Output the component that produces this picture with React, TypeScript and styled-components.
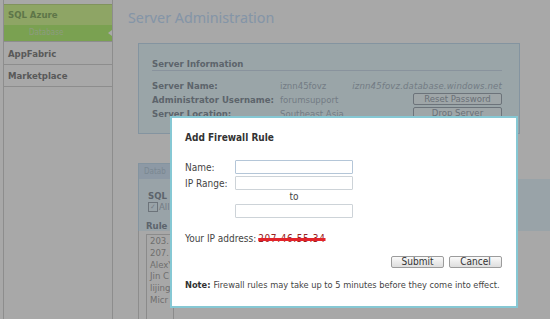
import React from "react";
import styled, { createGlobalStyle } from "styled-components";

const GlobalStyle = createGlobalStyle`
  html, body {
    margin: 0;
    padding: 0;
    background: #ffffff;
    font-family: "DejaVu Sans Condensed", "DejaVu Sans", Tahoma, sans-serif;
    font-size: 9px;
    color: #333;
  }
`;

const Page = styled.div`
  display: flex;
  height: 319px;
  overflow: hidden;
  background: #ffffff;
`;

const Sidebar = styled.nav`
  width: 108px;
  margin-left: 3px;
  padding-top: 4px;
  border-left: 1px solid #d7d7d7;
  border-right: 1px solid #d7d7d7;
  background: #ffffff;
  flex-shrink: 0;
`;

const NavItem = styled.div<{ $active?: boolean }>`
  height: 21px;
  line-height: 21px;
  padding-left: 4px;
  font-weight: bold;
  font-size: 9.5px;
  color: ${(p) => (p.$active ? "#8fb36e" : "#888888")};
  background: ${(p) => (p.$active ? "#d8fa9a" : "transparent")};
  border-bottom: ${(p) => (p.$active ? "none" : "1px solid #d7d7d7")};
  box-shadow: ${(p) => (p.$active ? "inset 0 1px 0 #c4e08e" : "none")};
`;

const SubItem = styled.div`
  position: relative;
  height: 16px;
  line-height: 16px;
  padding-left: 25px;
  font-size: 8px;
  color: #d6ecbf;
  background: #b9f47c;
  border-bottom: 1px solid #d7d7d7;
  margin-bottom: 1px;

  &::after {
    content: "";
    position: absolute;
    right: 0;
    top: 5px;
    border-style: solid;
    border-width: 3px 4px 3px 0;
    border-color: transparent #ffffff transparent transparent;
  }
`;

const Main = styled.main`
  flex: 1;
  padding: 8px 0 0 15px;
  min-width: 0;
`;

const Title = styled.h1`
  margin: 0;
  font-family: "Noto Sans", "Open Sans", sans-serif;
  font-weight: normal;
  font-size: 14.3px;
  line-height: 20px;
  color: #c8e2fd;
`;

const InfoPanel = styled.section`
  width: 350px;
  margin: 15px 0 0 10px;
  padding: 14px 17px 13px 13px;
  background: #eafbff;
  border: 1px solid #c8e1f3;
`;

const PanelHeading = styled.h2`
  margin: 0 0 7px;
  padding-bottom: 1px;
  font-size: 9.5px;
  line-height: 11px;
  font-weight: bold;
  color: #8d98a4;
  border-bottom: 1px solid #d1e0ee;
`;

const InfoGrid = styled.div`
  display: grid;
  grid-template-columns: 128px 71px 1fr;
  grid-auto-rows: 14px;
  align-items: center;
`;

const Label = styled.span`
  font-weight: bold;
  font-size: 9.5px;
  color: #8d98a4;
  white-space: nowrap;
`;

const Value = styled.span<{ $italic?: boolean }>`
  font-size: 9.5px;
  color: #afbcca;
  white-space: nowrap;
  font-style: ${(p) => (p.$italic ? "italic" : "normal")};
  justify-self: ${(p) => (p.$italic ? "end" : "start")};
  letter-spacing: ${(p) => (p.$italic ? "0.15px" : "0")};
`;

const PanelButton = styled.button`
  justify-self: end;
  width: 89px;
  height: 12px;
  padding: 0;
  font-family: inherit;
  font-size: 9.5px;
  line-height: 10px;
  color: #a1abb6;
  background: #f2fcff;
  border: 1px solid #a4afb9;
  border-radius: 2px;
`;

const DbPanel = styled.section`
  width: 440px;
  margin: 29px 0 0 10px;
`;

const DbTab = styled.div`
  display: inline-block;
  width: 92px;
  height: 15px;
  line-height: 15px;
  padding-left: 5px;
  font-size: 8px;
  color: #bacede;
  background: #d6e9fa;
  border: 1px solid #c8e1f3;
  border-bottom: none;
`;

const DbSection = styled.div`
  height: 52px;
  padding: 11px 0 0 9px;
  box-sizing: border-box;
  background: #e8f7ff;
  border-left: 1px solid #c8e1f3;
`;

const SectionTitle = styled.div`
  font-weight: bold;
  font-size: 9.5px;
  line-height: 11px;
  color: #8d98a4;
`;

const CheckRow = styled.label`
  display: flex;
  align-items: center;
  gap: 1px;
  font-size: 9.5px;
  line-height: 11px;
  color: #afbcca;
`;

const Check = styled.span`
  width: 8px;
  height: 8px;
  border: 1px solid #a4afb9;
  font-size: 7px;
  line-height: 8px;
  text-align: center;
`;

const RulesLabel = styled.div`
  margin: 8px 0 0 -2px;
  font-weight: bold;
  font-size: 9.5px;
  line-height: 11px;
  color: #8d98a4;
`;

const DbLower = styled.div`
  padding: 3px 0 0 7px;
  border-left: 1px solid #d7d7d7;
  height: 100px;
`;

const RulesList = styled.ul`
  list-style: none;
  margin: 0;
  padding: 0 3px;
  width: 20px;
  height: 90px;
  overflow: hidden;
  white-space: nowrap;
  border: 1px solid #d4d4d4;
  font-size: 9.5px;
  line-height: 11.8px;
  color: #a9a9a9;
`;

const Overlay = styled.div`
  position: fixed;
  inset: 0;
  background: rgba(0, 0, 0, 0.34);
`;

const Modal = styled.div`
  position: fixed;
  left: 170px;
  top: 116px;
  width: 317px;
  height: 160px;
  padding: 14px 14px 14px 13px;
  background: #ffffff;
  border: 2px solid #86c8d4;
  color: #3a3a3a;
`;

const ModalTitle = styled.h3`
  margin: 0 0 17px;
  font-size: 10px;
  line-height: 11px;
  font-weight: bold;
  color: #333;
`;

const FormGrid = styled.div`
  display: grid;
  grid-template-columns: 50px 118px;
  row-gap: 2px;
  align-items: center;
`;

const FieldLabel = styled.label`
  font-size: 10px;
  color: #444;
  white-space: nowrap;
`;

const Input = styled.input<{ $focus?: boolean }>`
  box-sizing: border-box;
  width: 118px;
  height: 14px;
  margin: 0;
  padding: 0 2px;
  border: 1px solid ${(p) => (p.$focus ? "#b4c6d8" : "#cdd3d8")};
  border-radius: 1px;
  background: #fff;
  font-size: 9px;
`;

const ToText = styled.div`
  grid-column: 2;
  text-align: center;
  font-size: 10px;
  line-height: 10px;
  color: #444;
`;

const IpLine = styled.div`
  display: flex;
  align-items: baseline;
  margin-top: 15px;
  font-size: 10px;
  line-height: 11px;
  color: #444;
`;

const Struck = styled.span`
  margin-left: 2px;
  color: #9a2020;
  letter-spacing: 0.6px;
  text-decoration: line-through;
  text-decoration-color: #e3242b;
  text-decoration-thickness: 3px;
`;

const ButtonRow = styled.div`
  display: flex;
  justify-content: flex-end;
  gap: 5px;
  margin-top: 12px;
`;

const DialogButton = styled.button`
  width: 53px;
  height: 12px;
  padding: 0;
  font-family: inherit;
  font-size: 10px;
  line-height: 10px;
  color: #333;
  background: linear-gradient(#fafafa, #dedede);
  border: 1px solid #9c9c9c;
  border-radius: 2px;
`;

const Note = styled.p`
  display: flex;
  gap: 3px;
  margin: 12px 0 0;
  font-size: 9.2px;
  line-height: 10px;
  color: #444;
  white-space: nowrap;
`;

const NoteLead = styled.b`
  color: #333;
`;

const rules = ["203.", "207.", "AlexY", "Jin C", "lijing", "Micr"];

export default function App() {
  return (
    <>
      <GlobalStyle />
      <Page>
        <Sidebar>
          <NavItem $active>SQL Azure</NavItem>
          <SubItem>Database</SubItem>
          <NavItem>AppFabric</NavItem>
          <NavItem>Marketplace</NavItem>
        </Sidebar>
        <Main>
          <Title>Server Administration</Title>
          <InfoPanel>
            <PanelHeading>Server Information</PanelHeading>
            <InfoGrid>
              <Label>Server Name:</Label>
              <Value>iznn45fovz</Value>
              <Value $italic>iznn45fovz.database.windows.net</Value>
              <Label>Administrator Username:</Label>
              <Value>forumsupport</Value>
              <PanelButton>Reset Password</PanelButton>
              <Label>Server Location:</Label>
              <Value>Southeast Asia</Value>
              <PanelButton>Drop Server</PanelButton>
            </InfoGrid>
          </InfoPanel>
          <DbPanel>
            <DbTab>Datab</DbTab>
            <DbSection>
              <SectionTitle>SQL</SectionTitle>
              <CheckRow>
                <Check>✓</Check>All
              </CheckRow>
              <RulesLabel>Rule</RulesLabel>
            </DbSection>
            <DbLower>
              <RulesList>
                {rules.map((r) => (
                  <li key={r}>{r}</li>
                ))}
              </RulesList>
            </DbLower>
          </DbPanel>
        </Main>
      </Page>
      <Overlay />
      <Modal>
        <ModalTitle>Add Firewall Rule</ModalTitle>
        <FormGrid>
          <FieldLabel>Name:</FieldLabel>
          <Input $focus />
          <FieldLabel>IP Range:</FieldLabel>
          <Input />
          <ToText>to</ToText>
          <span />
          <Input />
        </FormGrid>
        <IpLine>
          <span>Your IP address:</span>
          <Struck>207.46.55.34</Struck>
        </IpLine>
        <ButtonRow>
          <DialogButton>Submit</DialogButton>
          <DialogButton>Cancel</DialogButton>
        </ButtonRow>
        <Note>
          <NoteLead>Note:</NoteLead>
          <span>Firewall rules may take up to 5 minutes before they come into effect.</span>
        </Note>
      </Modal>
    </>
  );
}
